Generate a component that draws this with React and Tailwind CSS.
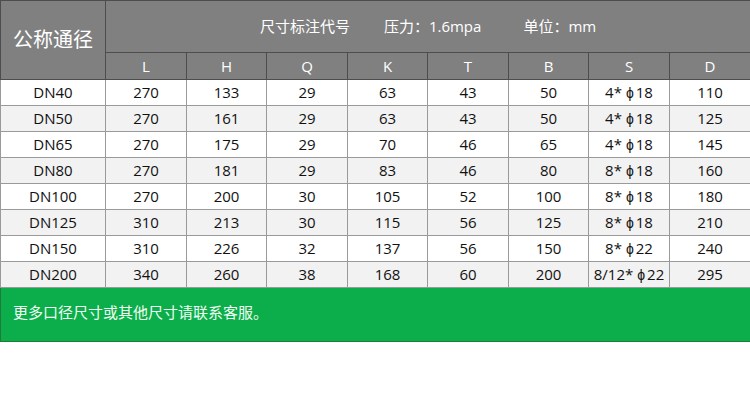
import React from "react";

const rows = [
  ["DN40", "270", "133", "29", "63", "43", "50", "4*|18", "110"],
  ["DN50", "270", "161", "29", "63", "43", "50", "4*|18", "125"],
  ["DN65", "270", "175", "29", "70", "46", "65", "4*|18", "145"],
  ["DN80", "270", "181", "29", "83", "46", "80", "8*|18", "160"],
  ["DN100", "270", "200", "30", "105", "52", "100", "8*|18", "180"],
  ["DN125", "310", "213", "30", "115", "56", "125", "8*|18", "210"],
  ["DN150", "310", "226", "32", "137", "56", "150", "8*|22", "240"],
  ["DN200", "340", "260", "38", "168", "60", "200", "8/12*|22", "295"],
];
const cols = ["L", "H", "Q", "K", "T", "B", "S", "D"];
const widths = [105, 81, 80, 81, 80, 81, 80, 81, 81];

function Cell({ v }) {
  if (v.includes("|")) {
    const [a, b] = v.split("|");
    return (
      <>
        {a}
        <span className="ml-[4px] mr-[2px] text-[14px]">ϕ</span>
        {b}
      </>
    );
  }
  return v;
}

export default function App() {
  return (
    <div className="w-[750px] h-[397px] bg-white" style={{ fontFamily: '"Open Sans", "Noto Sans CJK SC", sans-serif' }}>
      <table className="table-fixed border-collapse w-[750px]">
        <colgroup>
          {widths.map((w, i) => (
            <col key={i} style={{ width: w }} />
          ))}
        </colgroup>
        <thead>
          <tr className="h-[52px] bg-[#808080] text-white">
            <th rowSpan={2} className="border border-[#4d4d4d] font-normal text-[20px] leading-none">公称通径</th>
            <th colSpan={8} className="border border-[#4d4d4d] font-normal text-[15px]">
              <span>尺寸标注代号</span>
              <span className="ml-[34px]">压力：1.6mpa</span>
              <span className="ml-[42px]">单位：mm</span>
            </th>
          </tr>
          <tr className="h-[27px] bg-[#808080] text-white">
            {cols.map((c) => (
              <th key={c} className="border border-[#4d4d4d] font-normal text-[15px] leading-none">{c}</th>
            ))}
          </tr>
        </thead>
        <tbody>
          {rows.map((r, i) => (
            <tr key={r[0]} className={`h-[26px] ${i % 2 === 0 ? "bg-white" : "bg-[#f2f2f2]"}`}>
              {r.map((c, j) => (
                <td key={j} className="border border-[#9a9a9a] text-center text-[15px] leading-none text-[#111]"><Cell v={c} /></td>
              ))}
            </tr>
          ))}
          <tr className="h-[54px] bg-[#0bae4a]">
            <td colSpan={9} className="border border-[#1f7a3c] text-[#f0fff4] text-[15px] pl-[12px] pb-[4px]" style={{ fontFamily: '"Noto Sans CJK SC", sans-serif' }}>
              更多口径尺寸或其他尺寸请联系客服。
            </td>
          </tr>
        </tbody>
      </table>
    </div>
  );
}
